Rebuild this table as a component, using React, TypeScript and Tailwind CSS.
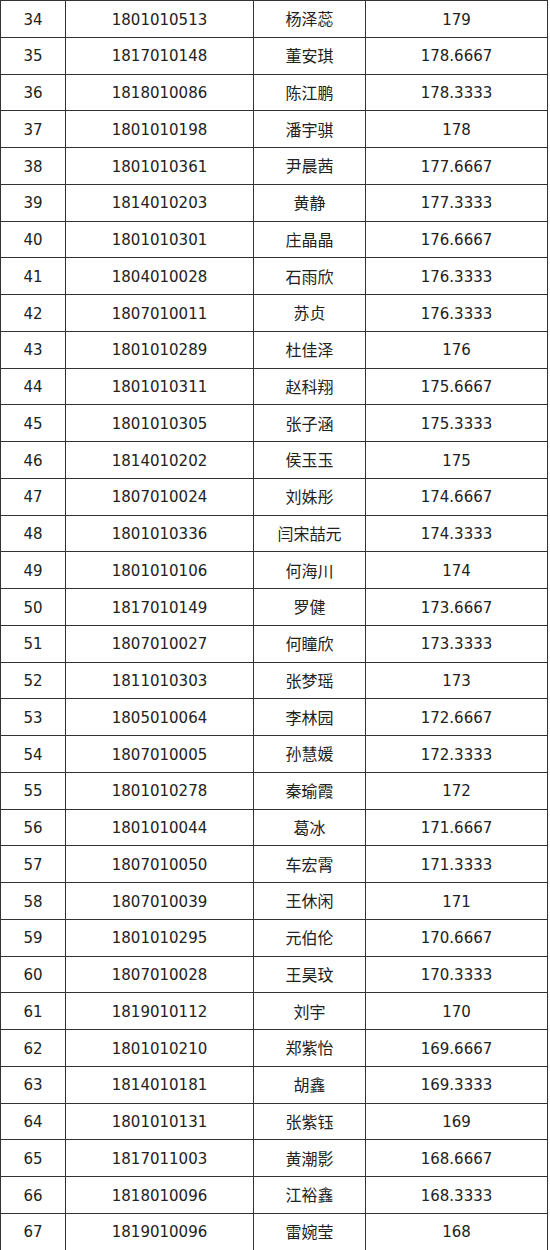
import React from "react";

const rows: [number, string, string, string][] = [
  [34, "1801010513", "杨泽蕊", "179"],
  [35, "1817010148", "董安琪", "178.6667"],
  [36, "1818010086", "陈江鹏", "178.3333"],
  [37, "1801010198", "潘宇骐", "178"],
  [38, "1801010361", "尹晨茜", "177.6667"],
  [39, "1814010203", "黄静", "177.3333"],
  [40, "1801010301", "庄晶晶", "176.6667"],
  [41, "1804010028", "石雨欣", "176.3333"],
  [42, "1807010011", "苏贞", "176.3333"],
  [43, "1801010289", "杜佳泽", "176"],
  [44, "1801010311", "赵科翔", "175.6667"],
  [45, "1801010305", "张子涵", "175.3333"],
  [46, "1814010202", "侯玉玉", "175"],
  [47, "1807010024", "刘姝彤", "174.6667"],
  [48, "1801010336", "闫宋喆元", "174.3333"],
  [49, "1801010106", "何海川", "174"],
  [50, "1817010149", "罗健", "173.6667"],
  [51, "1807010027", "何瞳欣", "173.3333"],
  [52, "1811010303", "张梦瑶", "173"],
  [53, "1805010064", "李林园", "172.6667"],
  [54, "1807010005", "孙慧媛", "172.3333"],
  [55, "1801010278", "秦瑜霞", "172"],
  [56, "1801010044", "葛冰", "171.6667"],
  [57, "1807010050", "车宏霄", "171.3333"],
  [58, "1807010039", "王休闲", "171"],
  [59, "1801010295", "元伯伦", "170.6667"],
  [60, "1807010028", "王昊玟", "170.3333"],
  [61, "1819010112", "刘宇", "170"],
  [62, "1801010210", "郑紫怡", "169.6667"],
  [63, "1814010181", "胡鑫", "169.3333"],
  [64, "1801010131", "张紫钰", "169"],
  [65, "1817011003", "黄潮影", "168.6667"],
  [66, "1818010096", "江裕鑫", "168.3333"],
  [67, "1819010096", "雷婉莹", "168"],
];

export default function App() {
  return (
    <div className="bg-white w-[550px] h-[1250px] overflow-hidden">
      <div
        className="w-[548px] border-l border-t border-[#333] text-[#222] text-[15px]"
        style={{ fontFamily: '"DejaVu Sans", "Noto Sans CJK SC", sans-serif' }}
      >
        {rows.map(([n, id, name, score]) => (
          <div key={n} className="flex h-[36.75px] border-b border-[#333]">
            <div className="w-[65px] border-r border-[#333] flex items-center justify-center pt-[2px]">
              {n}
            </div>
            <div className="w-[188px] border-r border-[#333] flex items-center justify-center pt-[2px]">
              {id}
            </div>
            <div
              className="w-[112px] border-r border-[#333] flex items-center justify-center pb-[1px] text-[16px] leading-none"
              style={{ fontFamily: '"Noto Sans CJK SC", sans-serif' }}
            >
              {name}
            </div>
            <div className="flex-1 border-r border-[#333] flex items-center justify-center pt-[2px]">
              {score}
            </div>
          </div>
        ))}
      </div>
    </div>
  );
}
